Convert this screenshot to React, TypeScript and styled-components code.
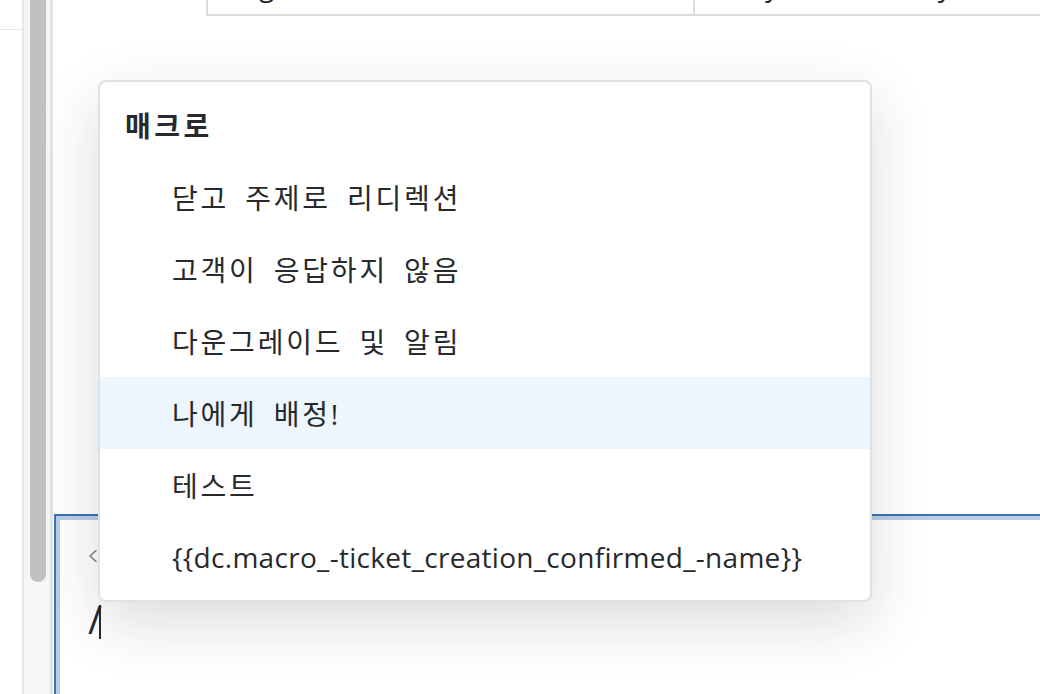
import React from "react";
import styled, { createGlobalStyle } from "styled-components";

const GlobalStyle = createGlobalStyle`
  html, body { margin: 0; padding: 0; background: #ffffff; }
  body {
    font-family: "Open Sans", "Noto Sans CJK KR", sans-serif;
    color: #27292c;
  }
`;

const Page = styled.div`
  display: flex;
  width: 1040px;
  height: 694px;
  overflow: hidden;
  background: #ffffff;
`;

const Gutter = styled.div`
  width: 22px;
  flex: none;
`;

const GutterRow = styled.div`
  height: 29px;
  border-bottom: 1px solid #e8e8e8;
`;

const ScrollTrack = styled.div`
  flex: none;
  width: 16px;
  background: #f6f6f6;
  border-left: 2px solid #e6e6e6;
  border-right: 3px solid #e3e3e3;
  padding: 0 4px 0 6px;
  box-sizing: content-box;
`;

const ScrollThumb = styled.div`
  height: 582px;
  background: #c1c1c1;
  border-radius: 0 0 8px 8px;
`;

const Main = styled.div`
  flex: 1;
  position: relative;
  display: flex;
  flex-direction: column;
  min-width: 0;
`;

const TopTable = styled.div`
  display: flex;
  margin: -38px -40px 0 153px;
  height: 54px;
  flex: none;
  box-sizing: border-box;
  border-left: 2px solid #d8dcde;
  border-bottom: 2px solid #d8dcde;
  font-size: 28px;
  line-height: 40px;
  color: #27292c;
`;

const Cell = styled.div<{ $w?: number }>`
  flex: ${(p) => (p.$w ? `0 0 ${p.$w}px` : "1")};
  box-sizing: border-box;
  padding: 0 24px 9px 20px;
  display: flex;
  align-items: flex-end;
  border-left: ${(p) => (p.$w ? "none" : "2px solid #d8dcde")};
  white-space: nowrap;
  overflow: hidden;
`;

const Editor = styled.div`
  margin: auto -40px -20px 1px;
  height: 200px;
  flex: none;
  border: 2px solid #3d71b4;
  box-shadow: inset 0 0 0 4px #b9cde5;
  padding: 33px 29px 0 32px;
  box-sizing: border-box;
  background: #ffffff;
`;

const EditorToolbar = styled.div`
  height: 14px;
  display: flex;
  align-items: center;
  color: #7a8189;
`;

const EditorText = styled.div`
  margin-top: 36px;
  height: 40px;
  font-size: 38px;
  line-height: 40px;
  display: flex;
  align-items: flex-end;
  color: #27292c;
`;

const Slash = styled.span`
  align-self: center;
  font-weight: 500;
`;

const Caret = styled.span`
  display: inline-block;
  width: 2px;
  height: 34px;
  background: #27292c;
  margin-left: -3px;
`;

const Menu = styled.div`
  position: absolute;
  left: 45px;
  top: 80px;
  width: 774px;
  box-sizing: border-box;
  background: #ffffff;
  border: 2px solid #dfe2e5;
  border-radius: 8px;
  padding: 7px 0;
  box-shadow: 0 20px 60px rgba(23, 35, 45, 0.16);
`;

const MenuHeader = styled.div`
  height: 72px;
  display: flex;
  align-items: center;
  padding-left: 25px;
  font-size: 28px;
  letter-spacing: 3.5px;
  font-weight: 700;
  color: #27292c;
`;

const MenuItem = styled.div<{ $active?: boolean; $latin?: boolean }>`
  height: 72px;
  display: flex;
  align-items: center;
  padding-left: 72px;
  font-size: 28px;
  letter-spacing: ${(p) => (p.$latin ? "0.3px" : "2.8px")};
  word-spacing: ${(p) => (p.$latin ? "0" : "6px")};
  color: #27292c;
  background: ${(p) => (p.$active ? "#edf5fd" : "transparent")};
  white-space: nowrap;
`;

const items = [
  "닫고 주제로 리디렉션",
  "고객이 응답하지 않음",
  "다운그레이드 및 알림",
  "나에게 배정!",
  "테스트",
  "{{dc.macro_-ticket_creation_confirmed_-name}}",
];

export default function App() {
  return (
    <>
      <GlobalStyle />
      <Page>
        <Gutter>
          <GutterRow />
        </Gutter>
        <ScrollTrack>
          <ScrollThumb />
        </ScrollTrack>
        <Main>
          <TopTable>
            <Cell $w={485}>Tag</Cell>
            <Cell>Daily in the library</Cell>
          </TopTable>
          <Editor>
            <EditorToolbar>
              <svg width="10" height="14" viewBox="0 0 10 14" fill="none">
                <path d="M8 1.5 L2 7 L8 12.5" stroke="currentColor" strokeWidth="1.6" strokeLinecap="round" strokeLinejoin="round" />
              </svg>
            </EditorToolbar>
            <EditorText>
              <Slash>/</Slash>
              <Caret />
            </EditorText>
          </Editor>
          <Menu>
            <MenuHeader>매크로</MenuHeader>
            {items.map((t, i) => (
              <MenuItem key={t} $active={i === 3} $latin={i === 5}>
                {t}
              </MenuItem>
            ))}
          </Menu>
        </Main>
      </Page>
    </>
  );
}
